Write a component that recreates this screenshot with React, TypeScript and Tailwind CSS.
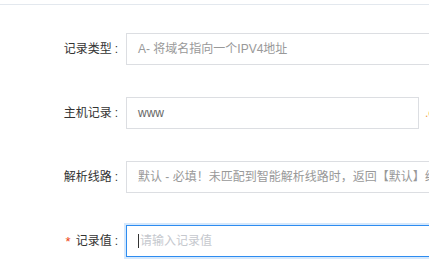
const font = "font-['Liberation_Sans','Noto_Sans_CJK_SC',sans-serif]";

const Label = ({ text, required }: { text: string; required?: boolean }) => (
  <div className="flex w-[118px] shrink-0 items-center justify-end text-[12px] text-[#333]">
    {required && <span className="mr-[5px] mt-[2px] text-[13px] text-[#ed4014]">*</span>}
    <span>{text}</span>
    <span className="ml-[3px]">:</span>
  </div>
);

export default function App() {
  return (
    <div className={`h-screen w-screen overflow-hidden bg-white ${font}`}>
      <div className="mt-1 border-t border-[#e3e8ee] pt-[28px]">
        <div className="mb-8 flex h-8 items-center">
          <Label text="记录类型" />
          <div className="ml-2 flex h-8 w-[380px] shrink-0 items-center border border-[#dcdee2] pl-[11px] text-[12px] text-[#999]">
            A- 将域名指向一个IPV4地址
          </div>
        </div>

        <div className="mb-8 flex h-8 items-center">
          <Label text="主机记录" />
          <div className="ml-2 flex h-8 w-[293px] shrink-0 items-center border border-[#dcdee2] pl-[11px] text-[12px] text-[#666]">
            www
          </div>
          <span className="ml-[6px] whitespace-nowrap text-[12px] text-[#f0a04b]">.example.com</span>
        </div>

        <div className="mb-8 flex h-8 items-center">
          <Label text="解析线路" />
          <div className="ml-2 flex h-8 w-[380px] shrink-0 items-center whitespace-nowrap border border-[#dcdee2] pl-[11px] text-[12px] text-[#999]">
            默认 - 必填！未匹配到智能解析线路时，返回【默认】线路设置结果
          </div>
        </div>

        <div className="flex h-8 items-center">
          <Label text="记录值" required />
          <div className="ml-2 flex h-8 w-[380px] shrink-0 items-center border border-[#2d8cf0] pl-[11px] text-[12px] text-[#c5c8ce] shadow-[0_0_0_2px_rgba(45,140,240,0.2)]">
            <span className="mr-px h-[14px] w-px bg-[#333]" />
            请输入记录值
          </div>
        </div>
      </div>
    </div>
  );
}
